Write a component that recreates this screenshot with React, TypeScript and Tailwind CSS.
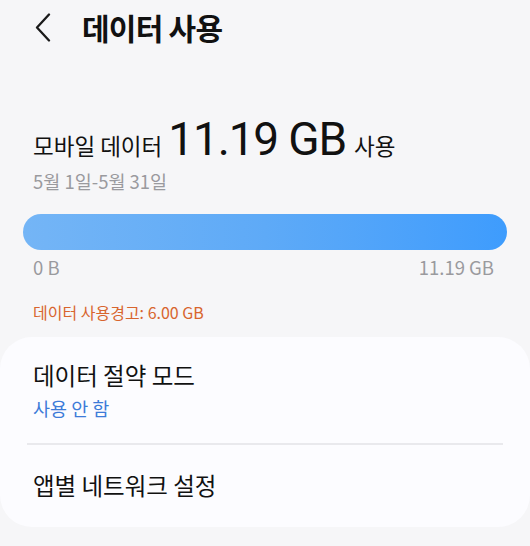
import React from "react";

const font = { fontFamily: "'Noto Sans CJK KR', 'Noto Sans', sans-serif" };

function BackIcon() {
  return (
    <svg width="16" height="29" viewBox="0 0 16 29" fill="none">
      <path d="M14 1.5L2 14.5l12 13" stroke="#1a1a1a" strokeWidth="2.3" strokeLinecap="round" strokeLinejoin="round" />
    </svg>
  );
}

export default function App() {
  return (
    <div
      className="h-[546px] w-[530px] overflow-hidden bg-[#f6f6f8] text-[#111]"
      style={font}
    >
      <header className="flex h-[54px] items-center pl-[35px]">
        <BackIcon />
        <h1 className="ml-[31px] text-[30px] font-bold leading-none tracking-tight">데이터 사용</h1>
      </header>

      <section className="px-[33px] pt-[62px]">
        <div className="flex items-baseline">
          <span className="text-[22.5px]">모바일 데이터</span>
          <span className="ml-[6px] text-[46px] leading-none tracking-tight" style={{ fontFamily: "Roboto, 'Noto Sans CJK KR', sans-serif" }}>11.19 GB</span>
          <span className="ml-[8px] text-[22.5px]">사용</span>
        </div>
        <p className="mt-[9px] text-[18.5px] leading-none text-[#9a9a9e]">5월 1일-5월 31일</p>
      </section>

      <div className="mx-[23px] mt-[24px] h-[36px] rounded-full bg-gradient-to-r from-[#74b5f6] via-[#5eaaf7] to-[#3e9cfd]" />

      <div className="mt-[4px] flex justify-between px-[33px] text-[18.5px] text-[#9a9a9e]">
        <span>0 B</span>
        <span className="pr-[3px]">11.19 GB</span>
      </div>

      <p className="mt-[22px] px-[33px] text-[16px] leading-none text-[#d8652e]">데이터 사용경고: 6.00 GB</p>

      <div className="mt-[17px] rounded-[32px] bg-[#fcfcff] px-[33px]">
        <div className="pb-[25px] pt-[24px]">
          <p className="text-[23.5px] leading-tight">데이터 절약 모드</p>
          <p className="mt-[9px] text-[18.5px] leading-none text-[#3d7bd8]">사용 안 함</p>
        </div>
        <div className="-mx-[6px] h-[2px] bg-[#e9e9ed]" />
        <div className="pb-[27px] pt-[26px]">
          <p className="text-[23.5px] leading-tight">앱별 네트워크 설정</p>
        </div>
      </div>
    </div>
  );
}
